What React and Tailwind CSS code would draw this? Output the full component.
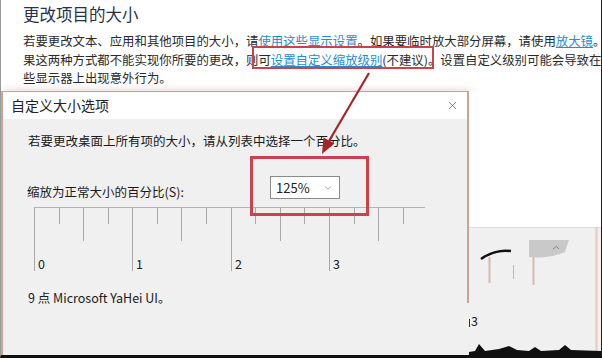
import React from 'react';
import { X, ChevronDown } from 'lucide-react';

const FONT = "font-[family-name:'Noto_Sans_CJK_SC','Noto_Sans',sans-serif]";

function Ruler() {
  const ticks = Array.from({ length: 16 }, (_, i) => i);
  return (
    <svg width="466" height="76" className="block shrink-0">
      <line x1="31" y1="4.5" x2="422" y2="4.5" stroke="#b4b4b4" strokeWidth="1" />
      {ticks.map((i) => {
        const x = Math.round(31 + i * 24.58) + 0.5;
        const end = i % 4 === 0 ? 68 : i % 2 === 0 ? 38 : 21;
        return <line key={i} x1={x} y1="4.5" x2={x} y2={end} stroke="#a8a8a8" strokeWidth="1" />;
      })}
      {[0, 1, 2, 3].map((n) => (
        <text key={n} x={Math.round(31 + n * 4 * 24.58) + 4} y="66" fontSize="12.5" fill="#222">
          {n}
        </text>
      ))}
    </svg>
  );
}

function Dialog() {
  return (
    <div className="relative w-[468px] shrink-0 border-l-2 border-t border-[#c8a49c] shadow-[2px_0_8px_rgba(190,140,130,0.45)] flex flex-col">
      {/* right border stops where the window behind shows through */}
      <div className="absolute right-0 top-0 h-[211px] w-[2px] bg-[#c9a39a]" />

      <div className="h-[27px] bg-white flex items-center justify-between pl-[8px] pr-[10px]">
        <span className="text-[14px] text-[#222]">自定义大小选项</span>
        <X size={13} strokeWidth={1.1} color="#333" />
      </div>

      <div className="flex-1 bg-[#f0f0f0] flex flex-col pt-[13px]">
        <p className="ml-[25px] text-[12.5px] leading-[18px] text-[#1a1a1a]">
          若要更改桌面上所有项的大小，请从列表中选择一个百分比。
        </p>
        <div className="ml-[24px] mt-[26px] flex items-center h-[23px]">
          <span className="w-[243px] text-[12.5px] leading-[18px] text-[#1a1a1a] pt-[8px]">缩放为正常大小的百分比(S):</span>
          <div className="w-[70px] h-[23px] bg-white border border-[#8a8a8a] flex items-center justify-between pl-[5px] pr-[6px]">
            <span className="text-[13px] text-[#222]">125%</span>
            <ChevronDown size={10} strokeWidth={1.5} color="#666" />
          </div>
        </div>
        <div className="mt-[4px]">
          <Ruler />
        </div>
        <p className="ml-[25px] mt-[10px] text-[12.5px] leading-[18px] text-[#1a1a1a]">9 点 Microsoft YaHei UI。</p>
      </div>
    </div>
  );
}

function BehindWindow() {
  return (
    <div className="relative flex-1 flex flex-col">
      <div className="h-[136px] bg-white" />
      <div className="flex-1 bg-[#f0f0f0] border-t border-[#dcdcdc]" />

      {/* fragments of the ruler of the window underneath */}
      <svg className="absolute left-0 top-[136px]" width="132" height="130">
        <path d="M12 32 Q26 22 42 24" stroke="#111" strokeWidth="2.5" fill="none" />
        <line x1="20.5" y1="30" x2="20.5" y2="56" stroke="#d9b8b0" strokeWidth="2" />
        <line x1="44.5" y1="38" x2="44.5" y2="52" stroke="#bbb" strokeWidth="1" />
        <line x1="64.5" y1="30" x2="64.5" y2="58" stroke="#d9b8b0" strokeWidth="2" />
        <path d="M60 13 H100 L96 25 Q80 32 60 30 Z" fill="#c9c9c9" />
        <path d="M84 22 l4 -3 M88 20 l2 2" stroke="#888" strokeWidth="1" />
        <line x1="127.5" y1="0" x2="127.5" y2="130" stroke="#e8c8c0" strokeWidth="2" />
        <line x1="0.5" y1="92" x2="0.5" y2="100" stroke="#333" strokeWidth="1" />
        <path d="M0 125 L6 124 L10 117 L16 124 L30 122 L40 119 L48 123 L60 124 L66 120 L72 124 L90 123 L96 118 L102 123 L132 124 L132 130 L0 130 Z" fill="#111" />
      </svg>
      <span className="absolute left-[2px] top-[222px] text-[12.5px] leading-[16px] text-[#222]">3</span>
    </div>
  );
}

export default function App() {
  return (
    <div className={`relative w-[602px] h-[358px] overflow-hidden bg-white border-l border-[#9a9a9a] border-r border-r-[#222] border-b-[3px] border-b-[#111] ${FONT}`}>
      <div className="h-[91px] pl-[22px] pt-[2px]">
        <h2 className="text-[16.5px] leading-[24px] text-[#26324c]">更改项目的大小</h2>
        <div className="mt-[6px] text-[12.4px] leading-[18.5px] text-[#2a2a2a] whitespace-nowrap">
          <div>
            若要更改文本、应用和其他项目的大小，请<span className="text-[#2a8ad4] underline">使用这些显示设置</span>。如果要临时放大部分屏幕，请使用<span className="text-[#2a8ad4] underline">放大镜</span>。或
          </div>
          <div>
            果这两种方式都不能实现你所要的更改，则可<span className="text-[#2a8ad4] underline">设置自定义缩放级别</span>(不建议)。设置自定义级别可能会导致在某
          </div>
          <div>些显示器上出现意外行为。</div>
        </div>
      </div>

      <div className="flex h-[264px]">
        <Dialog />
        <BehindWindow />
      </div>

      {/* annotations */}
      <div className="absolute left-[251px] top-[46px] w-[182px] h-[23px] border-2 border-[#c8434b]" />
      <div className="absolute left-[249px] top-[156px] w-[119px] h-[60px] border-[3px] border-[#c8434b]" />
      <svg className="absolute left-0 top-0 pointer-events-none" width="602" height="358">
        <line x1="368" y1="73" x2="328" y2="141" stroke="#a3262b" strokeWidth="2.2" />
        <path d="M321 154 L333.5 143.5 L322.5 137.5 Z" fill="#a3262b" />
      </svg>
    </div>
  );
}
